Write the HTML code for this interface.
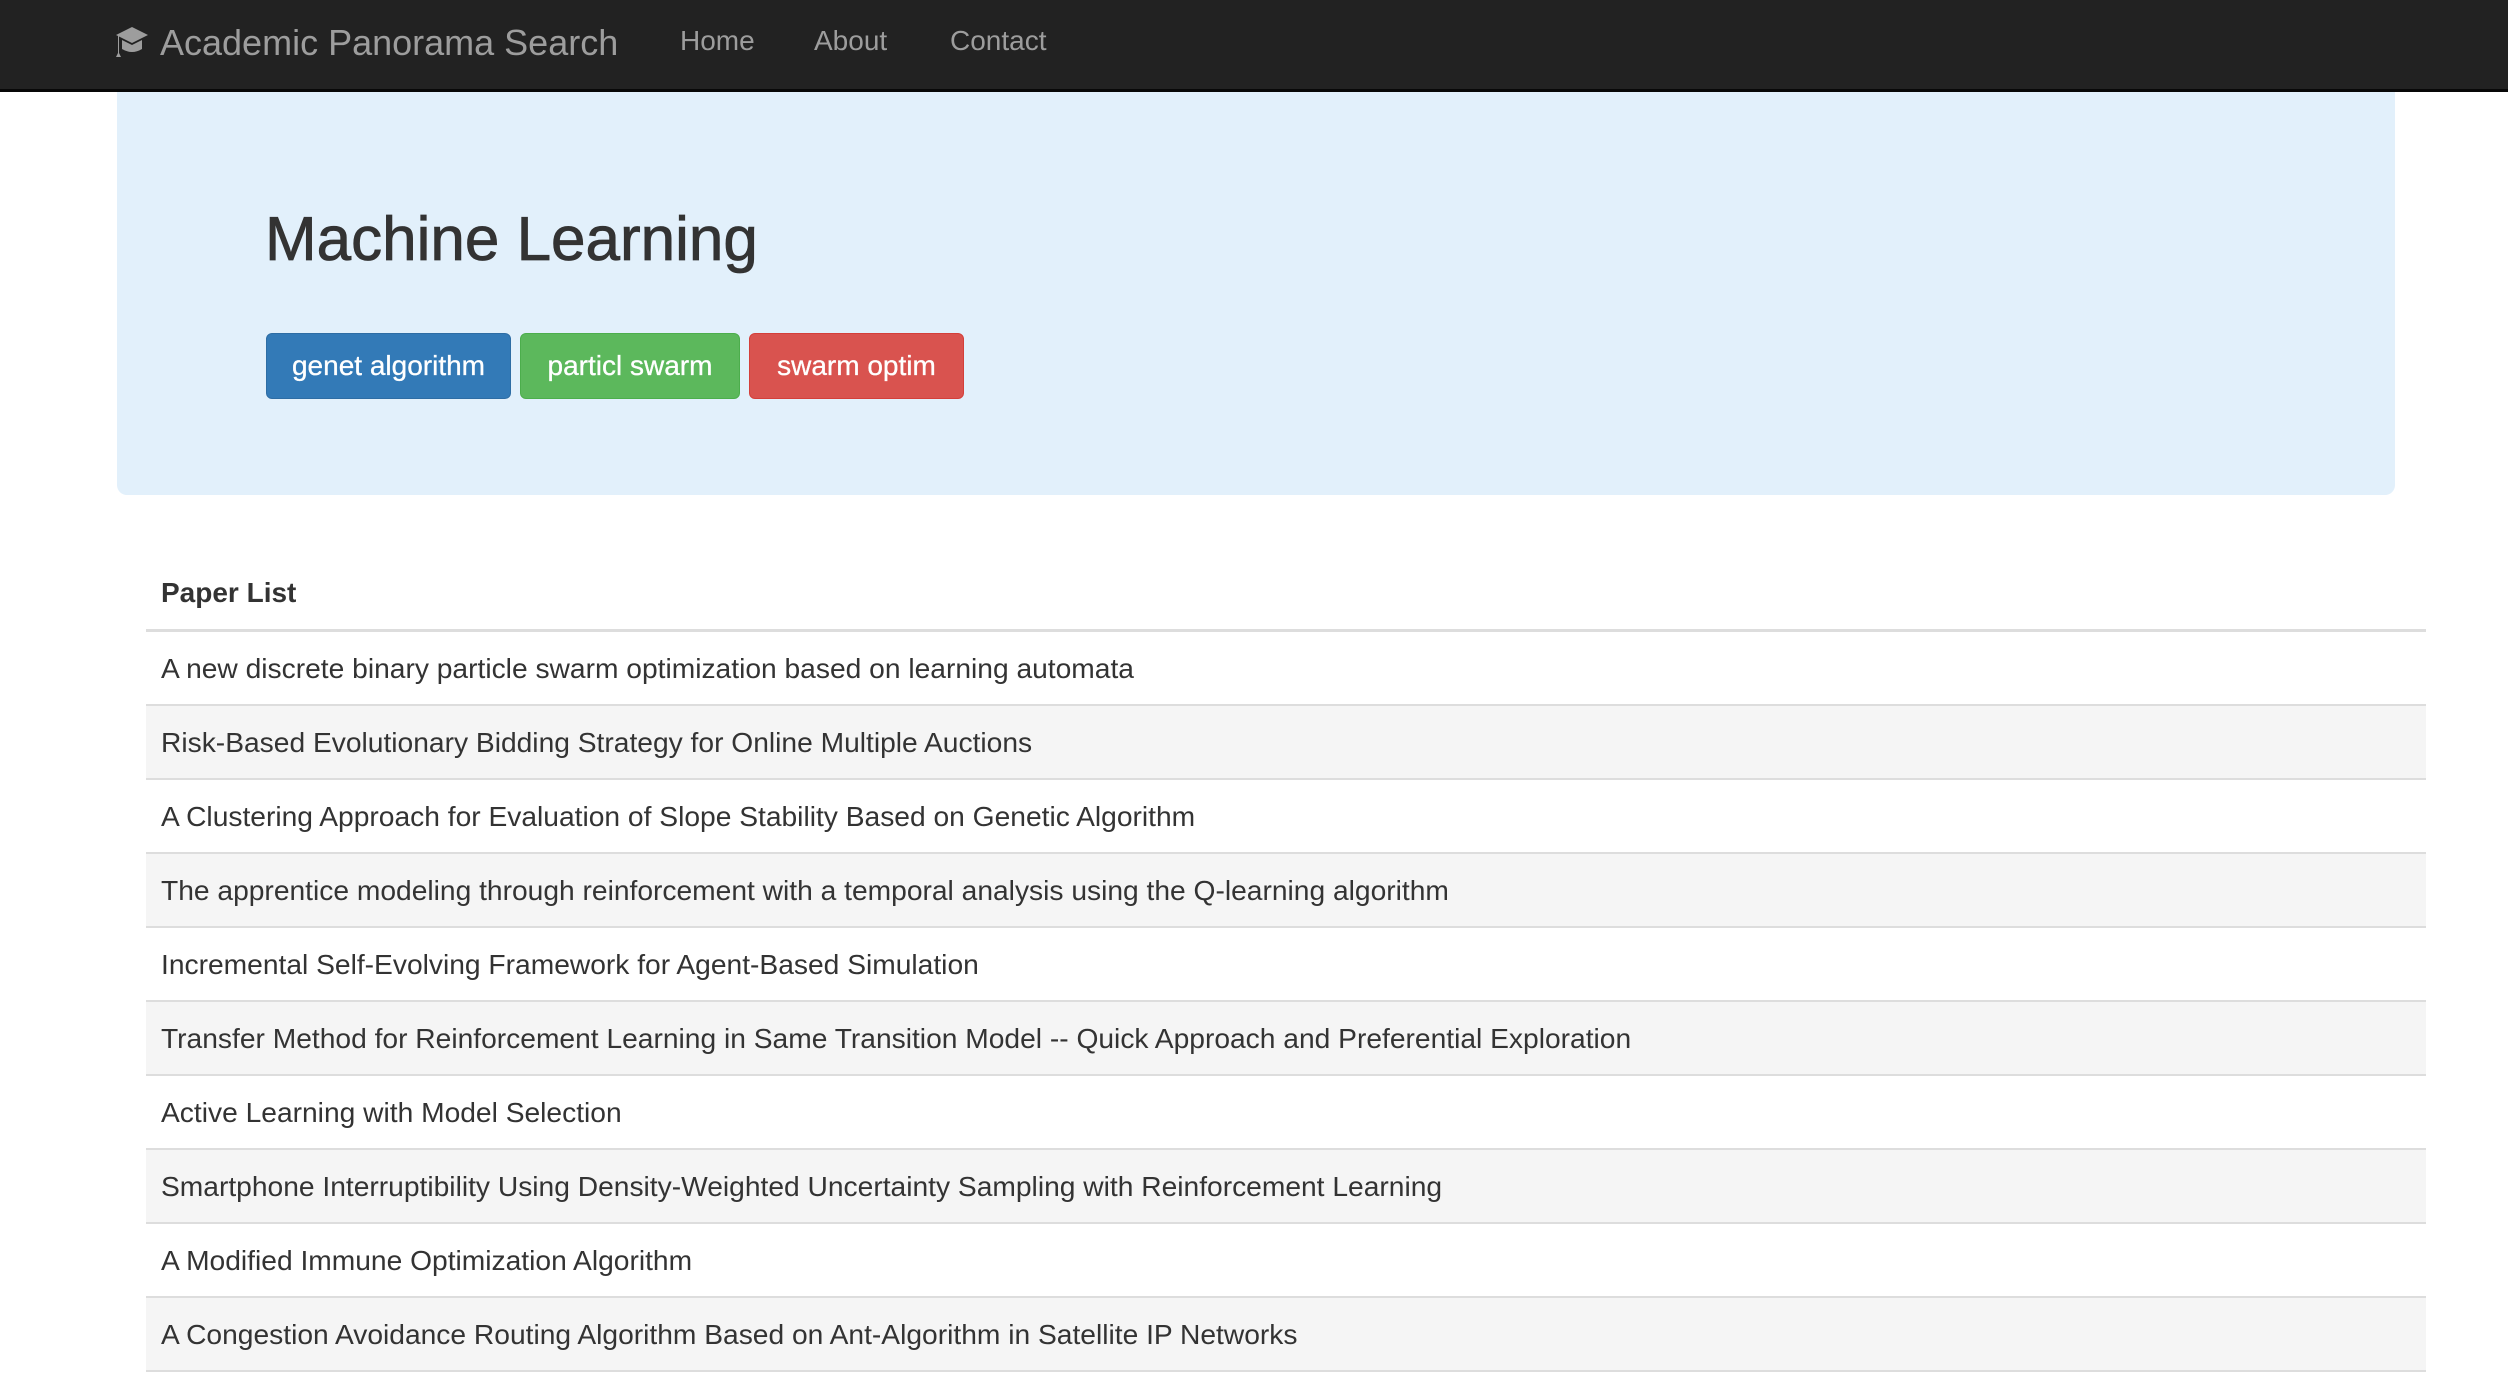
<!DOCTYPE html>
<html><head><meta charset="utf-8"><style>
*{box-sizing:border-box;margin:0;padding:0}
body{width:2508px;height:1386px;overflow:hidden;background:#fff;font-family:"Liberation Sans",Arial,sans-serif;color:#333}
.nav{position:absolute;left:0;top:0;width:2508px;height:92px;background:#222;border-bottom:3px solid #080808}
.brand{position:absolute;left:114px;top:21px;font-size:36px;color:#9d9d9d;line-height:44px;white-space:nowrap}
.brand svg{vertical-align:-4px;margin-right:10px}
.nl{position:absolute;top:20px;font-size:28px;color:#9d9d9d;line-height:42px}
.jumbo{position:absolute;left:117px;top:92px;width:2278px;height:403px;background:#e2f0fb;border-radius:0 0 10px 10px}
h1{position:absolute;left:265px;top:205px;font-size:62px;font-weight:normal;-webkit-text-stroke:0.8px #333;color:#333;line-height:70px;white-space:nowrap}
.btn{position:absolute;top:333px;height:66px;border-radius:6px;color:#fff;font-size:28px;line-height:64px;text-align:center;white-space:nowrap;border:1px solid;-webkit-text-stroke:0.3px #fff}
.tbl{position:absolute;left:146px;width:2280px}
.th{top:560px;height:72px;border-bottom:3px solid #ddd;font-weight:bold;font-size:28px;line-height:66px;padding-left:15px}
.row{position:absolute;left:146px;width:2280px;height:74px;border-bottom:2px solid #ddd;font-size:28.2px;line-height:72px;padding-left:15px;white-space:nowrap}
.s{background:#f5f5f5}
</style></head><body>
<div class="nav">
 <div class="brand"><svg width="36" height="34" viewBox="0 0 36 34"><path d="M18 2 L34 10 L18 18 L2 10 Z" fill="#9d9d9d"/><path d="M8 15 V24 Q18 30 28 24 V15 L18 20 Z" fill="#9d9d9d"/><path d="M4 11 V28 L2 32 H7 L5 28 V11 Z" fill="#9d9d9d"/></svg>Academic Panorama Search</div>
 <div class="nl" style="left:680px">Home</div>
 <div class="nl" style="left:814px">About</div>
 <div class="nl" style="left:950px">Contact</div>
</div>
<div class="jumbo"></div>
<h1>Machine Learning</h1>
<div class="btn" style="left:266px;width:245px;background:#337ab7;border-color:#2e6da4">genet algorithm</div>
<div class="btn" style="left:520px;width:220px;background:#5cb85c;border-color:#4cae4c">particl swarm</div>
<div class="btn" style="left:749px;width:215px;background:#d9534f;border-color:#d43f3a">swarm optim</div>
<div class="tbl th">Paper List</div>
<div class="row" style="top:632px">A new discrete binary particle swarm optimization based on learning automata</div>
<div class="row s" style="top:706px">Risk-Based Evolutionary Bidding Strategy for Online Multiple Auctions</div>
<div class="row" style="top:780px">A Clustering Approach for Evaluation of Slope Stability Based on Genetic Algorithm</div>
<div class="row s" style="top:854px">The apprentice modeling through reinforcement with a temporal analysis using the Q-learning algorithm</div>
<div class="row" style="top:928px">Incremental Self-Evolving Framework for Agent-Based Simulation</div>
<div class="row s" style="top:1002px">Transfer Method for Reinforcement Learning in Same Transition Model -- Quick Approach and Preferential Exploration</div>
<div class="row" style="top:1076px">Active Learning with Model Selection</div>
<div class="row s" style="top:1150px">Smartphone Interruptibility Using Density-Weighted Uncertainty Sampling with Reinforcement Learning</div>
<div class="row" style="top:1224px">A Modified Immune Optimization Algorithm</div>
<div class="row s" style="top:1298px">A Congestion Avoidance Routing Algorithm Based on Ant-Algorithm in Satellite IP Networks</div>
</body></html>
